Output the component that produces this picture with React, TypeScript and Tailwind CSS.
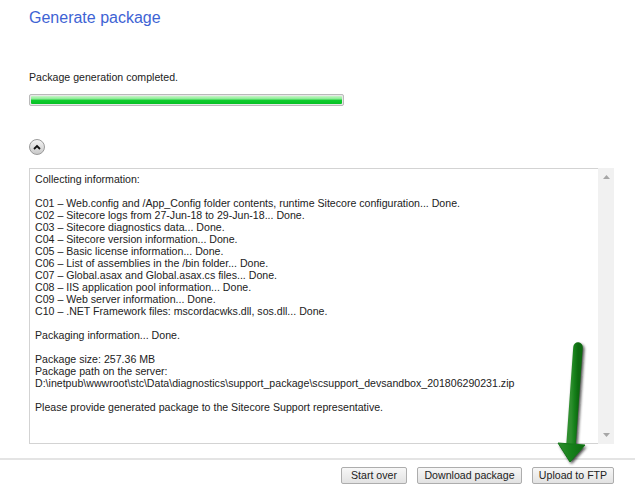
const lines = [
  'Collecting information:',
  '',
  'C01 – Web.config and /App_Config folder contents, runtime Sitecore configuration... Done.',
  'C02 – Sitecore logs from 27-Jun-18 to 29-Jun-18... Done.',
  'C03 – Sitecore diagnostics data... Done.',
  'C04 – Sitecore version information... Done.',
  'C05 – Basic license information... Done.',
  'C06 – List of assemblies in the /bin folder... Done.',
  'C07 – Global.asax and Global.asax.cs files... Done.',
  'C08 – IIS application pool information... Done.',
  'C09 – Web server information... Done.',
  'C10 – .NET Framework files: mscordacwks.dll, sos.dll... Done.',
  '',
  'Packaging information... Done.',
  '',
  'Package size: 257.36 MB',
  'Package path on the server:',
  'D:\\inetpub\\wwwroot\\stc\\Data\\diagnostics\\support_package\\scsupport_devsandbox_201806290231.zip',
  '',
  'Please provide generated package to the Sitecore Support representative.',
];

function ActionButton({ label, width }: { label: string; width: string }) {
  return (
    <button
      className={`${width} h-[17px] flex items-center justify-center border border-[#adadad] rounded-[2px] bg-[linear-gradient(to_bottom,#f7f7f7,#e2e2e2)] text-[10.6px] leading-none text-[#222]`}
    >
      {label}
    </button>
  );
}

function GreenArrow() {
  return (
    <svg className="absolute left-[548px] top-[338px]" width="50" height="135" viewBox="0 0 50 135">
      <defs>
        <filter id="sh" x="-50%" y="-20%" width="200%" height="140%">
          <feGaussianBlur stdDeviation="1.6" />
        </filter>
        <linearGradient id="gr" x1="0" x2="1" y1="0" y2="0">
          <stop offset="0" stopColor="#2f8f2f" />
          <stop offset="0.5" stopColor="#16801a" />
          <stop offset="1" stopColor="#0d6a10" />
        </linearGradient>
      </defs>
      <g filter="url(#sh)" opacity="0.8" transform="translate(1.5,2)">
        <path d="M30 9 L23 107" stroke="#111" strokeWidth="9.5" strokeLinecap="round" fill="none" />
        <path d="M10 105 L37 107 L22 124 Z" fill="#111" />
      </g>
      <path d="M30 9 L23 107" stroke="url(#gr)" strokeWidth="9.5" strokeLinecap="round" fill="none" />
      <path d="M10 105 L37 107 L22 124 Z" fill="url(#gr)" stroke="#15781a" strokeWidth="1" strokeLinejoin="round" />
    </svg>
  );
}

export default function App() {
  return (
    <div className="relative w-[635px] h-[503px] bg-white overflow-hidden font-['Liberation_Sans',Arial,sans-serif] text-[#222]">
      <div className="pl-[29px] pr-[21px]">
        <h1 className="pt-[8px] text-[16px] leading-[20px] text-[#3e63d4]">Generate package</h1>

        <p className="mt-[43px] text-[10.6px] leading-[12px]">Package generation completed.</p>

        <div className="mt-[11px] w-[315px] h-[12px] border border-[#b9b9b9] rounded-[2px] p-[1px] bg-[#e8e8e8]">
          <div className="h-full rounded-[1px] bg-[linear-gradient(to_bottom,#c6f6c6_0%,#8beb95_35%,#10cc2e_55%,#05c024_100%)]" />
        </div>

        <button className="mt-[33px] w-[16px] h-[16px] rounded-full border border-[#9a9a9a] bg-[linear-gradient(to_bottom,#f4f4f4,#c9c9c9)] flex items-center justify-center">
          <svg width="8" height="6" viewBox="0 0 8 6">
            <path d="M1 5 L4 2 L7 5" stroke="#111" strokeWidth="1.8" fill="none" />
          </svg>
        </button>

        <div className="mt-[13px] h-[276px] flex border border-[#d3d3d3] border-r-0">
          <div className="flex-1 pl-[5px] pt-[4px] text-[10.6px] leading-[12px] whitespace-pre">
            {lines.map((l, i) => (
              <div key={i} className="h-[12px]">{l}</div>
            ))}
          </div>
          <div className="w-[16px] -mt-px -mb-px bg-[#f1f1f1] flex flex-col items-center justify-between py-[7px]">
            <svg width="7" height="4" viewBox="0 0 7 4"><path d="M0 4 L3.5 0 L7 4 Z" fill="#a6a6a6" /></svg>
            <svg width="7" height="4" viewBox="0 0 7 4"><path d="M0 0 L3.5 4 L7 0 Z" fill="#a6a6a6" /></svg>
          </div>
        </div>
      </div>

      <div className="mt-[14px] h-[2px] bg-[#e4e4e4]" />

      <div className="mt-[7px] pr-[21px] flex justify-end gap-[10px]">
        <ActionButton label="Start over" width="w-[66px]" />
        <ActionButton label="Download package" width="w-[105px]" />
        <ActionButton label="Upload to FTP" width="w-[82px]" />
      </div>

      <GreenArrow />
    </div>
  );
}
